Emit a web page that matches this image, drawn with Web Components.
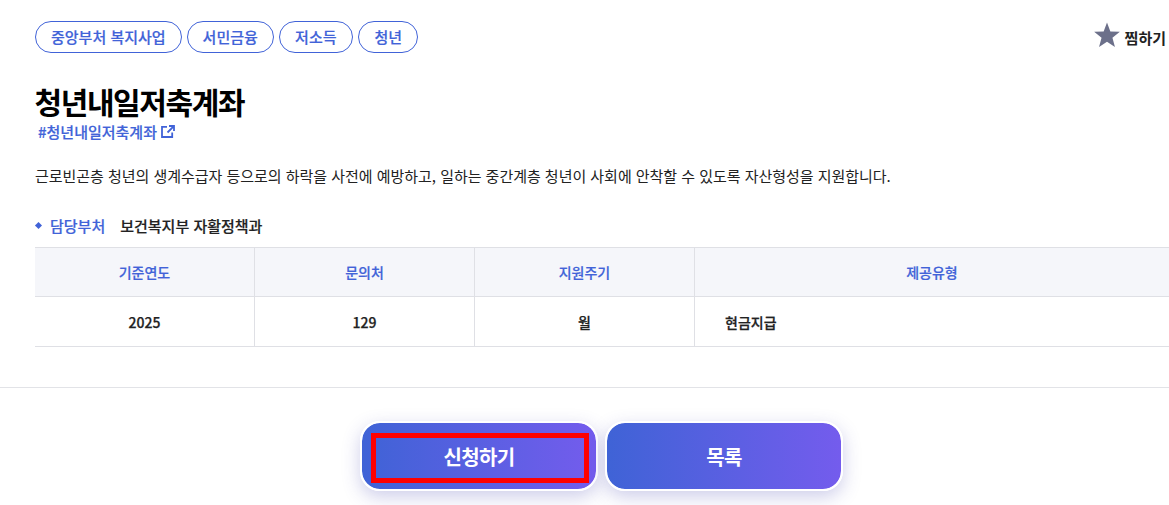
<!DOCTYPE html>
<html lang="ko">
<head>
<meta charset="utf-8">
<title>청년내일저축계좌</title>
<style>
  html, body { margin: 0; height: 505px; overflow: hidden; background: #fff; }
  body { font-family: "Noto Sans CJK KR", "Noto Sans", sans-serif; color: #111; }
</style>
</head>
<body>
<template id="detail-tpl">
  <style>
    :host { display: block; width: 1169px; height: 505px; overflow: hidden; }
    .wrap { padding: 21px 3px 0 35px; }
    .top { display: flex; justify-content: space-between; align-items: center; height: 32px; }
    .tags { display: flex; gap: 5px; }
    h1 { margin: 31px 0 0 -.5px; font-size: 30px; font-weight: 700; line-height: 34px; letter-spacing: -1.4px; color: #000; }
    .hash { display: flex; align-items: center; gap: 4px; margin: 3px 0 0 3px; font-size: 15px; font-weight: 500; line-height: 22px; color: #4163d8; -webkit-text-stroke: .2px #4163d8; }
    .hash svg { display: block; width: 14px; height: 13px; margin-top: -2px; }
    p { margin: 21px 0 0; font-size: 15px; line-height: 24px; letter-spacing: -.03px; color: #222; }
    .dept { display: flex; align-items: center; margin: 25px 0 0; height: 24px; font-size: 15px; -webkit-text-stroke: .2px; }
    .dept i { display: block; width: 5px; height: 5px; margin: 0 9px 0 1px; background: #4163d8; transform: rotate(45deg); }
    .dept b { font-weight: 500; color: #4163d8; margin-right: 15px; }
    .dept span { font-weight: 500; color: #222; }
    .table { margin: 10px -3px 0 0; }
    hr { margin: 40px 0 0; border: 0; border-top: 1px solid #e2e3e7; }
    .btns { display: flex; justify-content: center; gap: 7px; margin: 33px 0 0 34px; }
  </style>
  <div class="wrap">
    <div class="top">
      <div class="tags"><slot></slot></div>
      <slot name="action"></slot>
    </div>
    <h1>청년내일저축계좌</h1>
    <div class="hash">#청년내일저축계좌<svg viewBox="0 0 14 13" fill="none" stroke="#4163d8" stroke-width="1.8"><path d="M6 1.8H1v10.2h10.2V7.5"/><path d="M8 1h5v5M12.6 1.4L6.5 7.5"/></svg></div>
    <p>근로빈곤층 청년의 생계수급자 등으로의 하락을 사전에 예방하고, 일하는 중간계층 청년이 사회에 안착할 수 있도록 자산형성을 지원합니다.</p>
    <div class="dept"><i></i><b>담당부처</b><span>보건복지부 자활정책과</span></div>
    <info-table class="table"></info-table>
  </div>
  <hr>
  <div class="btns">
    <grad-button marked>신청하기</grad-button>
    <grad-button>목록</grad-button>
  </div>
</template>
<welfare-detail>
  <tag-chip>중앙부처 복지사업</tag-chip>
  <tag-chip>서민금융</tag-chip>
  <tag-chip style="padding:0 15.3px">저소득</tag-chip>
  <tag-chip style="margin-left:.4px;padding:0 15.2px">청년</tag-chip>
  <zzim-button slot="action"></zzim-button>
</welfare-detail>
<script>
(function () {
  "use strict";

  class TagChip extends HTMLElement {
    constructor() {
      super();
      this.attachShadow({ mode: "open" });
      this.shadowRoot.innerHTML =
        "<style>:host{display:block;box-sizing:border-box;height:32px;padding:0 15px;border:1px solid #4163d8;border-radius:16px;" +
        "font-size:15px;font-weight:500;line-height:29px;color:#4163d8;white-space:nowrap;-webkit-text-stroke:.2px #4163d8}</style><slot></slot>";
    }
  }

  class ZzimButton extends HTMLElement {
    constructor() {
      super();
      this.attachShadow({ mode: "open" });
      this.shadowRoot.innerHTML =
        "<style>:host{display:flex;align-items:center;gap:5px;font-size:15px;font-weight:700;color:#222}" +
        "svg{display:block;width:26px;height:26px;margin-top:-4px}</style>" +
        '<svg viewBox="0 0 25 25"><path fill="#6c708a" d="M12.5.5l3.23 8.55 9.13.43-7.13 5.72 2.41 8.82-7.64-5.02-7.64 5.02 2.41-8.82L.14 9.48l9.13-.43z"/></svg>' +
        "<span>찜하기</span>";
    }
  }

  class InfoTable extends HTMLElement {
    constructor() {
      super();
      this.attachShadow({ mode: "open" });
      var cols = [
        ["기준연도", "2025"],
        ["문의처", "129"],
        ["지원주기", "월"],
        ["제공유형", "현금지급"]
      ];
      var html = "";
      cols.forEach(function (c) { html += '<div class="th">' + c[0] + "</div>"; });
      cols.forEach(function (c) { html += '<div class="td">' + c[1] + "</div>"; });
      this.shadowRoot.innerHTML =
        "<style>:host{display:grid;grid-template-columns:220px 220px 220px 1fr;border-top:1px solid #dfe0e5;font-size:14px;-webkit-text-stroke:.2px}" +
        ".th,.td{display:flex;align-items:center;justify-content:center;box-sizing:border-box;border-bottom:1px solid #dfe0e5;border-right:1px solid #dfe0e5}" +
        ".th{height:49px;background:#f5f6fa;color:#4163d8;font-weight:500}" +
        ".td{height:50px;color:#222;font-weight:500;-webkit-text-stroke:.25px}" +
        ".th:nth-of-type(4),.td:nth-of-type(8){border-right:0}" +
        ".td:nth-of-type(8){justify-content:flex-start;padding-left:30px}</style>" + html;
    }
  }

  class GradButton extends HTMLElement {
    constructor() {
      super();
      this.attachShadow({ mode: "open" });
      this.shadowRoot.innerHTML =
        "<style>:host{display:block;position:relative;box-sizing:border-box;width:238px;height:70px;border:2px solid #fff;border-radius:20px;" +
        "background:linear-gradient(90deg,#3f63d6,#745ced) padding-box;color:#fff;font-size:20px;font-weight:700;letter-spacing:-.6px;" +
        "box-shadow:0 6px 18px rgba(60,60,170,.25)}" +
        ".in{display:flex;height:100%;align-items:center;justify-content:center;padding-top:1px;box-sizing:border-box}" +
        ":host([marked])::after{content:'';position:absolute;left:9px;top:10px;width:218px;height:50px;box-sizing:border-box;border:5px solid #f00}</style>" +
        '<div class="in"><slot></slot></div>';
    }
  }

  class WelfareDetail extends HTMLElement {
    constructor() {
      super();
      this.attachShadow({ mode: "open" });
      var t = document.getElementById("detail-tpl");
      this.shadowRoot.appendChild(t.content.cloneNode(true));
    }
  }

  customElements.define("tag-chip", TagChip);
  customElements.define("zzim-button", ZzimButton);
  customElements.define("info-table", InfoTable);
  customElements.define("grad-button", GradButton);
  customElements.define("welfare-detail", WelfareDetail);
})();
</script>
</body>
</html>
